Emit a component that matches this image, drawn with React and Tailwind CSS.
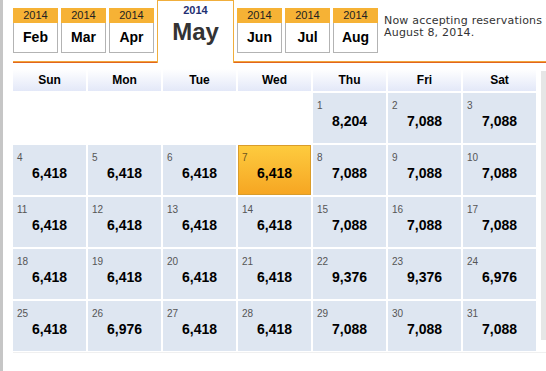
import React from "react";

const tabs = [
  { m: "Feb" },
  { m: "Mar" },
  { m: "Apr" },
  { m: "May", sel: true },
  { m: "Jun" },
  { m: "Jul" },
  { m: "Aug" },
];

const weeks = [
  [null, null, null, null, [1, "8,204"], [2, "7,088"], [3, "7,088"]],
  [[4, "6,418"], [5, "6,418"], [6, "6,418"], [7, "6,418", true], [8, "7,088"], [9, "7,088"], [10, "7,088"]],
  [[11, "6,418"], [12, "6,418"], [13, "6,418"], [14, "6,418"], [15, "7,088"], [16, "7,088"], [17, "7,088"]],
  [[18, "6,418"], [19, "6,418"], [20, "6,418"], [21, "6,418"], [22, "9,376"], [23, "9,376"], [24, "6,976"]],
  [[25, "6,418"], [26, "6,976"], [27, "6,418"], [28, "6,418"], [29, "7,088"], [30, "7,088"], [31, "7,088"]],
];

const days = ["Sun", "Mon", "Tue", "Wed", "Thu", "Fri", "Sat"];

function Tab({ m, sel }) {
  if (sel) {
    return (
      <div className="w-[77px] h-[63px] shrink-0 bg-white border border-b-0 border-[#f0ae3c] flex flex-col items-center pt-[3px]">
        <div className="text-[11px] leading-[12px] font-bold text-[#1f2f72]">2014</div>
        <div className="text-[24px] leading-[24px] font-bold text-[#333333] mt-[4px]">{m}</div>
      </div>
    );
  }
  return (
    <div className="w-[45px] h-[45px] shrink-0 mt-[8px] flex flex-col">
      <div className="h-[15px] bg-[#f6b235] text-[11px] leading-[15px] text-center text-[#222222]">2014</div>
      <div className="h-[30px] bg-white border border-t-0 border-[#b3b3b3] flex items-center justify-center text-[14px] font-bold text-black">
        {m}
      </div>
    </div>
  );
}

function Cell({ d }) {
  if (!d) return <div className="h-[50px]" />;
  const [n, p, sel] = d;
  if (sel) {
    return (
      <div className="h-[50px] bg-linear-to-b from-[#fdcb3e] to-[#f6a622] border border-[#d99c2b] flex flex-col">
        <div className="pl-[3px] pt-[7px] text-[10px] leading-[10px] text-[#6b5520]">{n}</div>
        <div className="mt-[3px] text-center text-[14px] leading-[14px] font-bold text-black">{p}</div>
      </div>
    );
  }
  return (
    <div className="h-[50px] bg-[#dee6f1] flex flex-col">
      <div className="pl-[4px] pt-[8px] text-[10px] leading-[10px] text-[#555555]">{n}</div>
      <div className="mt-[3px] text-center text-[14px] leading-[14px] font-bold text-black">{p}</div>
    </div>
  );
}

export default function App() {
  return (
    <div className="w-[546px] h-[371px] bg-white border-l-[3px] border-[#c6c6c6] pl-[10px] overflow-hidden font-['Liberation_Sans',Arial,sans-serif]">
      <div className="h-[62px] border-b border-[#f2a43a] shadow-[0_1px_0_#e2651e] flex items-start gap-[3px]">
        {tabs.map((t) => (
          <Tab key={t.m} {...t} />
        ))}
        <div className="ml-[3px] mt-[15px] whitespace-nowrap text-[11px] leading-[12px] tracking-[0.2px] text-[#333333] font-['DejaVu_Sans',Verdana,sans-serif]">
          Now accepting reservations through
          <br />
          August 8, 2014.
        </div>
      </div>
      <div className="mt-[7px] flex items-start">
        <div className="grid grid-cols-[repeat(7,73px)] gap-[2px] shrink-0">
          {days.map((d) => (
            <div
              key={d}
              className="h-[22px] bg-linear-to-b from-white to-[#e3e8f8] text-center text-[12px] leading-[22px] font-bold text-black"
            >
              {d}
            </div>
          ))}
          {weeks.flat().map((d, i) => (
            <Cell key={i} d={d} />
          ))}
        </div>
        <div className="ml-[5px] mt-[2px] w-[6px] h-[269px] bg-[#e6e6e6] shrink-0" />
      </div>
      <div className="h-px bg-[#f0f0f0] mt-px" />
    </div>
  );
}
